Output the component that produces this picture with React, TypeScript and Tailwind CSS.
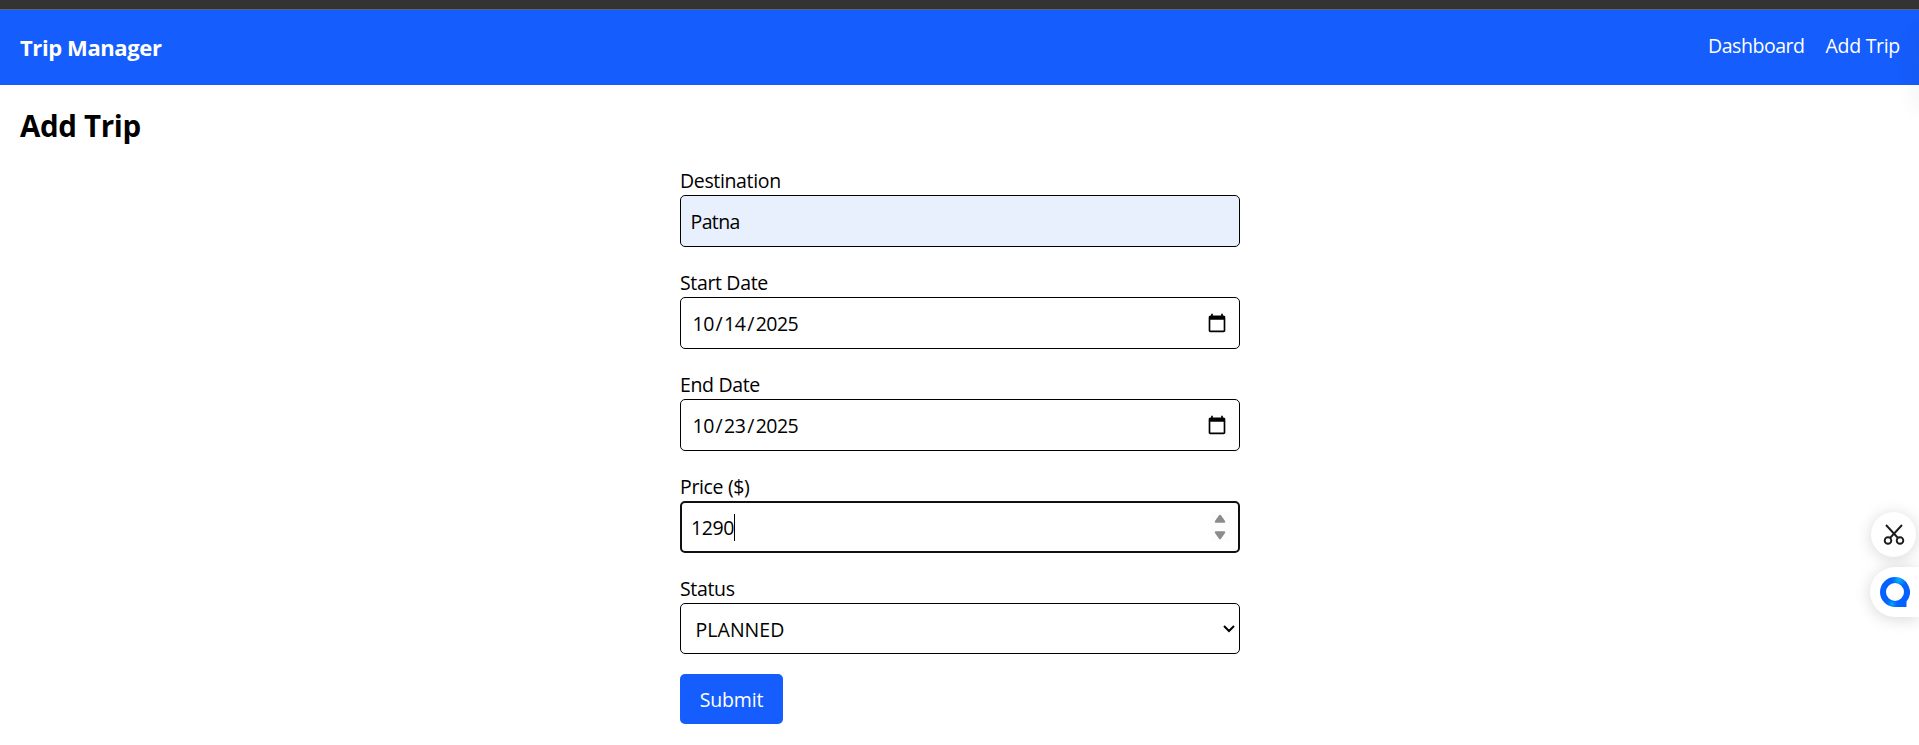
import React from "react";

function CalendarIcon() {
  return (
    <svg width="20" height="20" viewBox="0 0 24 24" fill="#000">
      <path d="M20 3h-1V1h-2v2H7V1H5v2H4c-1.1 0-2 .9-2 2v16c0 1.1.9 2 2 2h16c1.1 0 2-.9 2-2V5c0-1.1-.9-2-2-2zm0 18H4V8h16v13z" />
    </svg>
  );
}

function Field({ label, children }: { label: string; children: React.ReactNode }) {
  return (
    <div>
      <div className="h-[30px] pl-[0.5px] leading-[32px]">{label}</div>
      {children}
    </div>
  );
}

function DateBox({ month, day, year }: { month: string; day: string; year: string }) {
  return (
    <div className="flex h-[52px] items-center justify-between rounded-[5px] border border-black pl-3 pr-3">
      <span className="flex pt-[2px] tracking-[-0.5px]">
        {month}
        <span className="px-[1.8px]">/</span>
        {day}
        <span className="px-[1.8px]">/</span>
        {year}
      </span>
      <CalendarIcon />
    </div>
  );
}

export default function App() {
  return (
    <div className="relative h-[745px] overflow-hidden bg-white font-['Open_Sans','Noto_Sans',sans-serif] text-[19.5px] tracking-[-0.35px] text-black">
      <div className="h-[10px] border-b border-[#5c6270] bg-[#333333]" />
      <nav className="flex h-[75px] items-start justify-between bg-[#155dfc] pl-5 pr-[19px] pt-5 text-white">
        <div className="text-[22px] font-bold leading-[35px] tracking-[-0.4px]">Trip Manager</div>
        <div className="flex gap-[21px] leading-[32px]">
          <a className="tracking-[-0.45px]">Dashboard</a>
          <a className="tracking-[-0.3px]">Add Trip</a>
        </div>
      </nav>
      <main className="p-5">
        <h1 className="mb-5 h-[40px] text-[29.5px] font-bold leading-[42px] tracking-[-0.35px]">Add Trip</h1>
        <form className="mx-auto flex w-[560px] flex-col gap-5">
          <Field label="Destination">
            <div className="flex h-[52px] items-center rounded-[5px] border border-black bg-[#e8f0fe] pl-[10px] pt-[2px] tracking-[-0.6px]">Patna</div>
          </Field>
          <Field label="Start Date">
            <DateBox month="10" day="14" year="2025" />
          </Field>
          <Field label="End Date">
            <DateBox month="10" day="23" year="2025" />
          </Field>
          <Field label="Price ($)">
            <div className="flex h-[52px] items-center rounded-[5px] border-2 border-[#101010] pl-[9.5px] pr-[8px]">
              <span className="pt-[2px] tracking-[-0.4px]">1290</span>
              <span className="h-[27px] w-px bg-black" />
              <span className="ml-auto flex h-[30px] w-[19px] items-center justify-center bg-[#fcfcfc]">
                <svg width="12" height="26" viewBox="0 0 12 26" fill="#8b8b8b">
                  <path d="M5 1.3Q6 0 7 1.3L11 7Q11.8 8.7 10.3 8.7H1.7Q.2 8.7 1 7Z" />
                  <path d="M5 24.7Q6 26 7 24.7L11 19Q11.8 17.3 10.3 17.3H1.7Q.2 17.3 1 19Z" />
                </svg>
              </span>
            </div>
          </Field>
          <Field label="Status">
            <div className="flex h-[51px] items-center justify-between rounded-[5px] border border-black pl-[15px] pr-1">
              <span className="pt-[2px] tracking-[0.05px]">PLANNED</span>
              <svg width="12" height="8" viewBox="0 0 12 8" fill="none" stroke="#000" strokeWidth="2">
                <path d="M1 1L6 6L11 1" />
              </svg>
            </div>
          </Field>
          <button type="button" className="h-[50px] w-[103px] rounded-[5px] bg-[#155dfc] pt-[2px] pl-[1px] tracking-[-0.2px] text-white">
            Submit
          </button>
        </form>
      </main>

      <div className="absolute right-[-12px] top-[30px] h-[80px] w-[12px] rounded-full shadow-[0_0_24px_rgba(0,0,0,0.09)]" />
      <div className="absolute left-[1871px] top-[512px] flex h-[45px] w-[45px] items-center justify-center rounded-full bg-white shadow-[0_2px_16px_rgba(0,0,0,0.16)]">
        <svg width="22" height="22" viewBox="0 0 22 22" fill="none" stroke="#1c1c1c" strokeWidth="1.9">
          <path d="M3 1L15 14M19 1L7 14" />
          <circle cx="5" cy="16.5" r="3.3" />
          <circle cx="17" cy="16.5" r="3.3" />
        </svg>
      </div>
      <div className="absolute left-[1870px] top-[567px] flex h-[50px] w-[49px] items-center rounded-l-full bg-white pl-[10px] shadow-[0_2px_16px_rgba(0,0,0,0.16)]">
        <svg width="30" height="30" viewBox="0 0 30 30">
          <defs>
            <radialGradient id="glow-top" cx="19" cy="3" r="7" gradientUnits="userSpaceOnUse">
              <stop offset="0" stopColor="#00b5f5" />
              <stop offset="1" stopColor="#0562ff" />
            </radialGradient>
            <radialGradient id="glow-bottom" cx="12" cy="27" r="7" gradientUnits="userSpaceOnUse">
              <stop offset="0" stopColor="#00b5f5" />
              <stop offset="1" stopColor="#0562ff" stopOpacity="0" />
            </radialGradient>
          </defs>
          <path fill="url(#glow-top)" fillRule="evenodd" d="M15 0A15 15 0 0 1 26.5 24.5V30H15A15 15 0 0 1 15 0ZM15 6A9 9 0 1 0 15 24A9 9 0 1 0 15 6Z" />
          <path fill="url(#glow-bottom)" fillRule="evenodd" d="M15 0A15 15 0 0 1 26.5 24.5V30H15A15 15 0 0 1 15 0ZM15 6A9 9 0 1 0 15 24A9 9 0 1 0 15 6Z" />
        </svg>
      </div>
    </div>
  );
}
